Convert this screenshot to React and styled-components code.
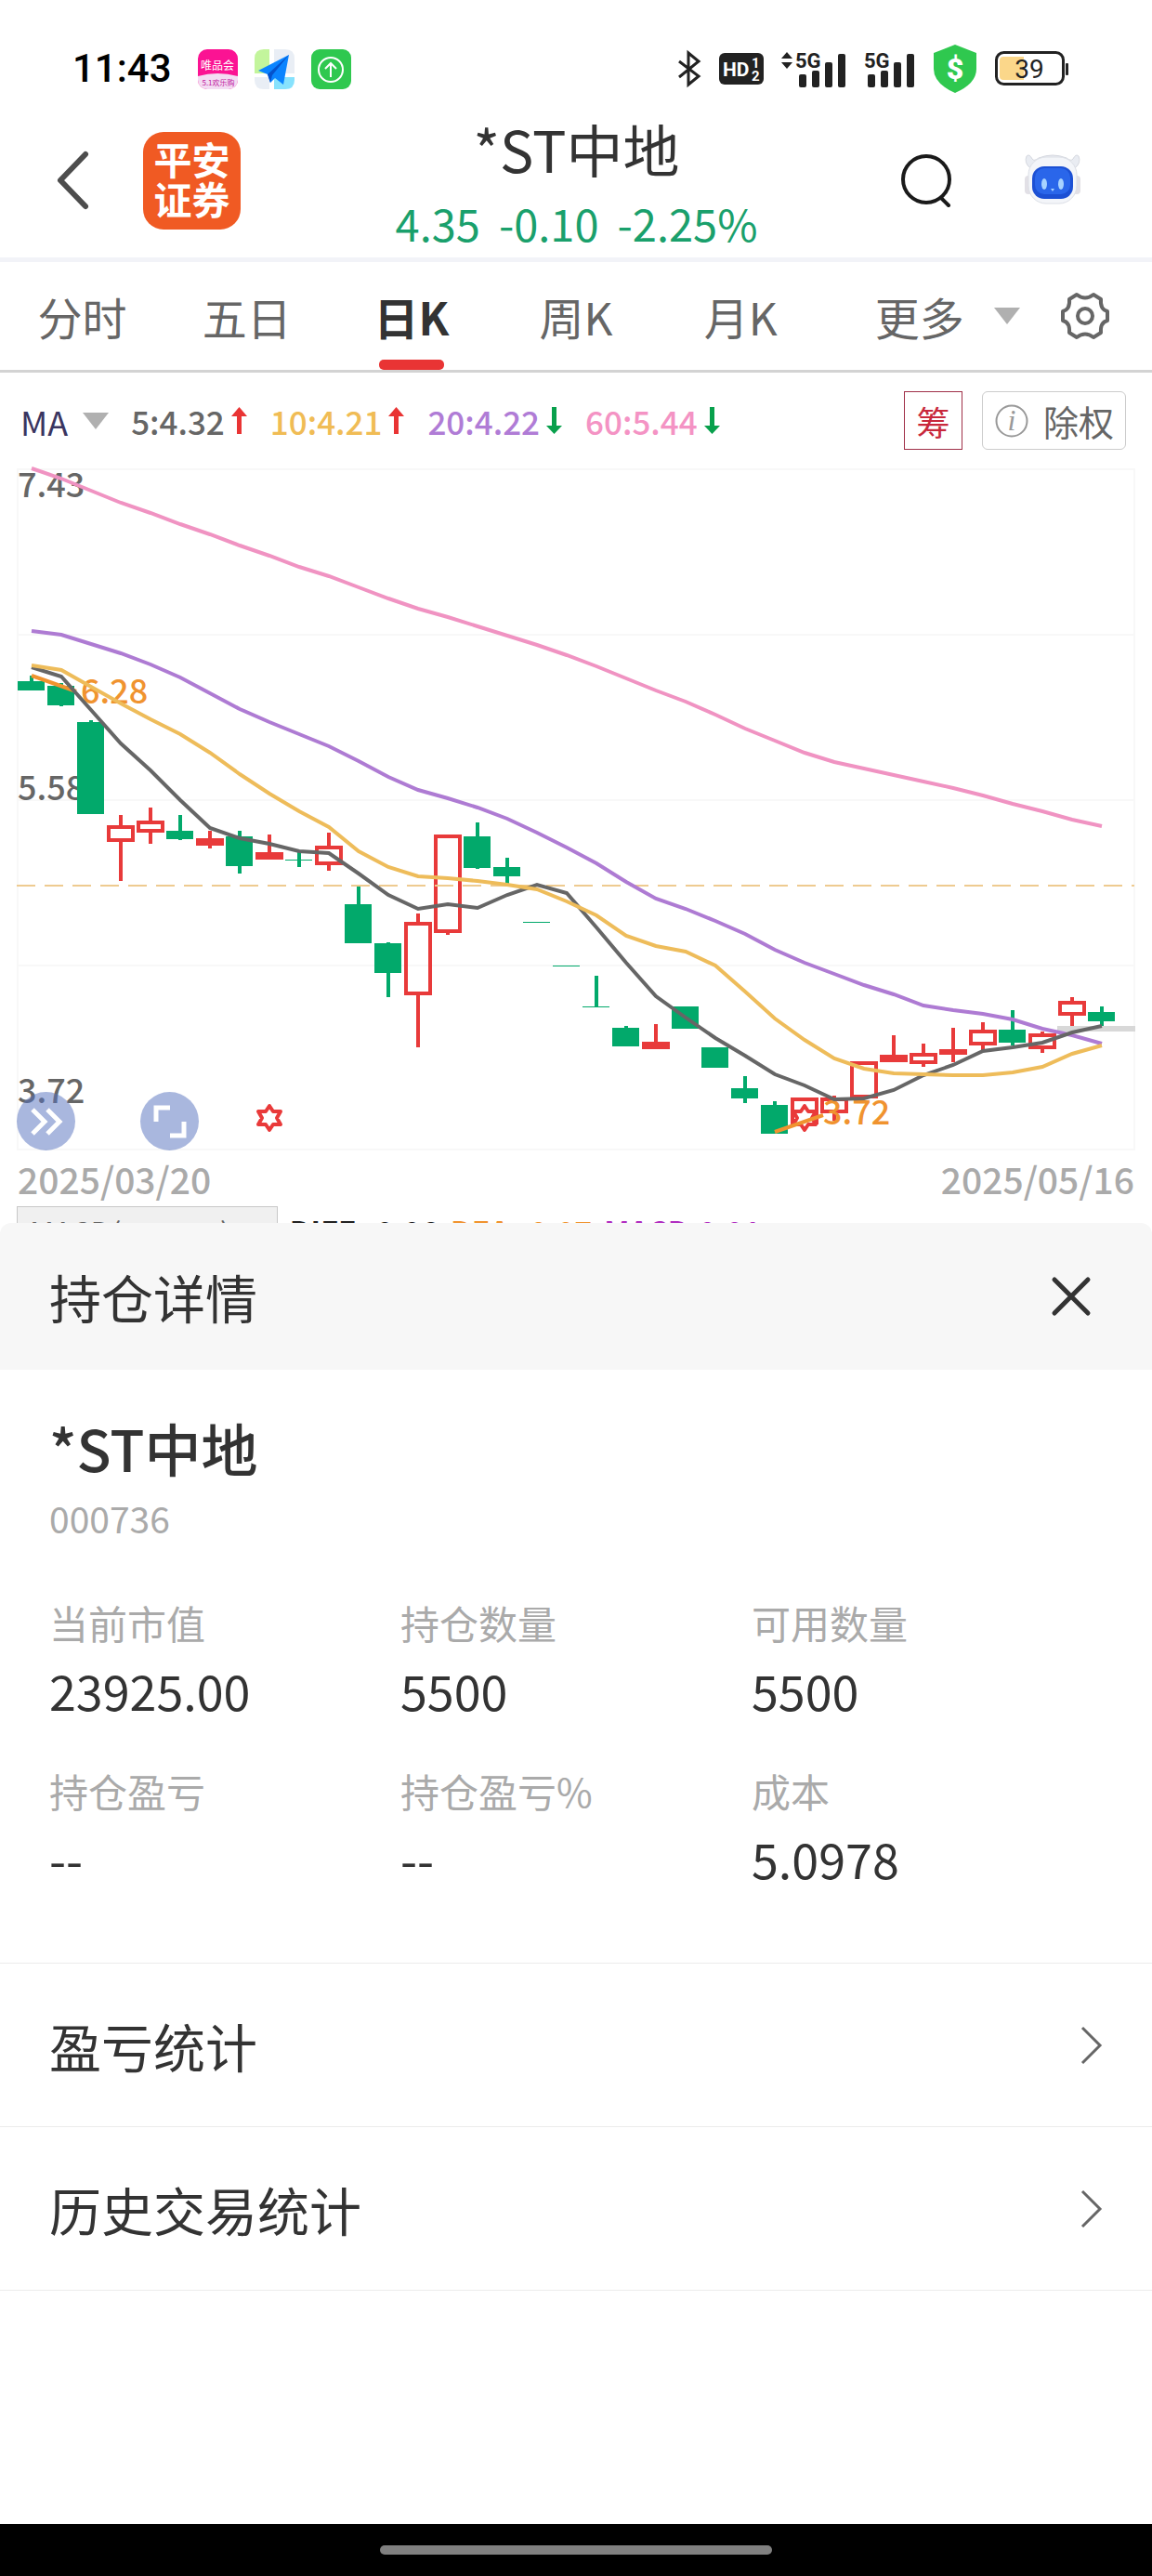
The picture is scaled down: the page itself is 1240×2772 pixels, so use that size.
import { useState } from "react";
import styled, { createGlobalStyle } from "styled-components";

const tabs = ["分时", "五日", "日K", "周K", "月K"];

const averages = [
  { label: "5:4.32", color: "#666666", up: true },
  { label: "10:4.21", color: "#f0bc55", up: true },
  { label: "20:4.22", color: "#b07cd6", up: false },
  { label: "60:5.44", color: "#f493c4", up: false },
];

const macd = [
  { label: "DIFF:-0.06", color: "#222222" },
  { label: "DEA:-0.07", color: "#f0932f" },
  { label: "MACD:0.01", color: "#b02cc0" },
];

const position = [
  { label: "当前市值", value: "23925.00" },
  { label: "持仓数量", value: "5500" },
  { label: "可用数量", value: "5500" },
  { label: "持仓盈亏", value: "--" },
  { label: "持仓盈亏%", value: "--" },
  { label: "成本", value: "5.0978" },
];

const links = ["盈亏统计", "历史交易统计"];

// [direction, body top, body bottom, wick top, wick bottom]
const candles = [
  ["down", 733, 743, 727, 743],
  ["down", 738, 759, 735, 760],
  ["down", 777, 876, 775, 876],
  ["up", 888, 906, 877, 948],
  ["up", 883, 896, 869, 908],
  ["down", 894, 903, 877, 904],
  ["up", 902, 910, 894, 913],
  ["down", 900, 932, 894, 940],
  ["up", 917, 925, 898, 925],
  ["down", 925, 926, 917, 933],
  ["up", 910, 931, 896, 937],
  ["down", 973, 1015, 954, 1015],
  ["down", 1015, 1047, 1014, 1073],
  ["up", 992, 1071, 983, 1127],
  ["up", 898, 1004, 898, 1006],
  ["down", 900, 934, 885, 935],
  ["down", 933, 943, 923, 952],
  ["down", 992, 993, 992, 993],
  ["down", 1039, 1040, 1039, 1040],
  ["down", 1083, 1084, 1050, 1083],
  ["down", 1106, 1126, 1104, 1126],
  ["up", 1121, 1129, 1102, 1129],
  ["down", 1083, 1107, 1083, 1107],
  ["down", 1127, 1149, 1127, 1149],
  ["down", 1171, 1182, 1158, 1187],
  ["down", 1189, 1220, 1185, 1220],
  ["up", 1181, 1210, 1181, 1210],
  ["up", 1181, 1198, 1179, 1206],
  ["up", 1142, 1182, 1142, 1182],
  ["up", 1135, 1143, 1114, 1143],
  ["up", 1133, 1145, 1123, 1148],
  ["up", 1129, 1135, 1106, 1143],
  ["up", 1108, 1125, 1100, 1130],
  ["down", 1108, 1122, 1087, 1125],
  ["up", 1112, 1129, 1110, 1133],
  ["up", 1077, 1093, 1073, 1104],
  ["down", 1089, 1099, 1083, 1104],
];

const lines = [
  {
    color: "#f093c2",
    points: [
      504, 515, 528, 541, 552, 564, 575, 587, 598, 610, 620, 632, 644, 655, 664,
      674, 684, 694, 705, 717, 730, 743, 755, 769, 784, 797, 810, 820, 827, 834,
      841, 848, 856, 865, 873, 882, 889,
    ],
  },
  {
    color: "#ae7bd3",
    points: [
      679, 683, 693, 703, 715, 729, 746, 763, 777, 790, 803, 819, 836, 850, 859,
      869, 881, 896, 912, 929, 949, 967, 978, 991, 1005, 1022, 1036, 1048, 1060,
      1070, 1082, 1087, 1091, 1097, 1107, 1114, 1123,
    ],
  },
  {
    color: "#666666",
    points: [
      718, 728, 764, 800, 829, 861, 891, 902, 908, 916, 918, 940, 963, 978, 973,
      977, 963, 952, 961, 998, 1036, 1072, 1095, 1117, 1136, 1156, 1168, 1183,
      1182, 1173, 1157, 1146, 1131, 1127, 1122, 1111, 1104,
    ],
  },
  {
    color: "#eebc5a",
    points: [
      716, 721, 739, 757, 774, 790, 810, 833, 854, 873, 890, 916, 933, 943, 945,
      948, 952, 957, 970, 985, 1007, 1018, 1024, 1039, 1067, 1096, 1119, 1139,
      1150, 1155, 1156, 1157, 1157, 1154, 1148, 1134, 1125,
    ],
  },
];

const candleX = (index) => 34 + index * 32;

const STAR =
  "M0 -13 L4 -7 L12 -7 L8 0 L12 7 L4 7 L0 13 L-4 7 L-12 7 L-8 0 L-12 -7 L-4 -7 Z";

function Candle({ index, data }) {
  const [direction, top, bottom, high, low] = data;
  const x = candleX(index);
  const up = direction === "up";
  const color = up ? "#e83a3a" : "#02a96b";

  return (
    <g stroke={color}>
      {high < top && <line x1={x} x2={x} y1={high} y2={top} strokeWidth="4" />}
      {low > bottom && (
        <line x1={x} x2={x} y1={bottom} y2={low} strokeWidth="4" />
      )}
      {up ? (
        <rect
          x={x - 13}
          y={top + 2}
          width="26"
          height={bottom - top - 4}
          fill="none"
          strokeWidth="4"
        />
      ) : (
        <rect
          x={x - 15}
          y={top}
          width="29"
          height={bottom - top}
          fill={color}
          stroke="none"
        />
      )}
    </g>
  );
}

function KLineChart() {
  return (
    <ChartSvg viewBox="0 500 1240 742" role="img" aria-label="日K">
      <g stroke="#f8f8f8" strokeWidth="2" fill="none">
        <rect x="19" y="505" width="1202" height="732" />
        <path d="M19 683H1221M19 861H1221M19 1039H1221" />
      </g>
      <AxisText x="19" y="535">
        7.43
      </AxisText>
      <AxisText x="19" y="861">
        5.58
      </AxisText>
      <AxisText x="19" y="1187">
        3.72
      </AxisText>
      <rect x="1138" y="1104" width="84" height="6" fill="#d8d8d8" />
      {candles.map((data, index) => (
        <Candle key={index} index={index} data={data} />
      ))}
      <line
        x1="18"
        x2="1221"
        y1="953"
        y2="953"
        stroke="#eecb90"
        strokeWidth="2"
        strokeDasharray="20 10"
      />
      <g fill="none" stroke="#e93a3a" strokeWidth="4" strokeLinejoin="round">
        <path d={STAR} transform="translate(290 1203)" />
        <path d={STAR} transform="translate(866 1203)" fill="#fff" />
      </g>
      <path
        d="M34 727L82 744M834 1218L886 1200"
        stroke="#f0932f"
        strokeWidth="4"
      />
      <MarkText x="87" y="757">
        6.28
      </MarkText>
      <MarkText x="886" y="1210">
        3.72
      </MarkText>
      {lines.map((line) => (
        <polyline
          key={line.color}
          points={line.points.map((y, i) => `${candleX(i)},${y}`).join(" ")}
          fill="none"
          stroke={line.color}
          strokeWidth="4"
        />
      ))}
    </ChartSvg>
  );
}

function Triangle() {
  return (
    <svg width="28" height="18" viewBox="0 0 28 18" aria-hidden="true">
      <path d="M0 0H28L14 18Z" fill="#b0b0b0" />
    </svg>
  );
}

function Arrow({ up }) {
  return (
    <svg width="17" height="29" viewBox="0 0 17 29" aria-hidden="true">
      {up ? (
        <path d="M8.5 0L17 10H11V29H6V10H0Z" fill="#e93434" />
      ) : (
        <path d="M8.5 29L17 20H11V0H6V20H0Z" fill="#08a04c" />
      )}
    </svg>
  );
}

function Signal({ roaming }) {
  return (
    <svg
      width={roaming ? 70 : 55}
      height="42"
      viewBox={roaming ? "-15 0 70 42" : "0 0 55 42"}
      aria-hidden="true"
    >
      {roaming && <path d="M-15 10L-9 3L-3 10ZM-15 14L-9 21L-3 14Z" />}
      <NetworkText x="0" y="20">
        5G
      </NetworkText>
      <rect x="4" y="27" width="8" height="14" rx="2" />
      <rect x="18" y="23" width="8" height="18" rx="2" />
      <rect x="32" y="14" width="8" height="27" rx="2" />
      <rect x="46" y="5" width="8" height="36" rx="2" />
    </svg>
  );
}

function StatusBar() {
  return (
    <Status>
      <Clock>11:43</Clock>
      <AppIcons>
        <svg width="43" height="43" viewBox="0 0 43 43" aria-hidden="true">
          <defs>
            <clipPath id="shop">
              <rect width="43" height="43" rx="10" />
            </clipPath>
          </defs>
          <g clipPath="url(#shop)">
            <rect width="43" height="43" fill="#fb1393" />
            <path d="M0 29Q21 23 43 29V43H0Z" fill="#f3dcf3" />
            <ShopText x="21" y="22" $size={12} fill="#fff">
              唯品会
            </ShopText>
            <ShopText x="22" y="39" $size={8} fill="#c0169c">
              5.1欢乐购
            </ShopText>
          </g>
        </svg>
        <svg width="43" height="43" viewBox="0 0 43 43" aria-hidden="true">
          <path d="M10 0H16V26H0V10Q0 0 10 0Z" fill="#c3f59c" />
          <path d="M21 0H33Q43 0 43 10V26H21Z" fill="#e9eef5" />
          <path d="M0 30H16V43H10Q0 43 0 33Z" fill="#e9eef5" />
          <path d="M21 30H43V33Q43 43 33 43H21Z" fill="#87e2fd" />
          <path d="M37 6L4 23L14 27L17 36L22 31L31 38Z" fill="#0a84ff" />
          <path d="M37 6L14 27L17 36L19 28Z" fill="#0552cc" />
        </svg>
        <svg width="43" height="43" viewBox="0 0 43 43" aria-hidden="true">
          <rect width="43" height="43" rx="9" fill="#2fc84f" />
          <g fill="none" stroke="#fff" strokeWidth="2">
            <circle cx="21" cy="22" r="13" />
            <path d="M21 30V15M15 21L21 15L27 21" />
          </g>
        </svg>
      </AppIcons>
      <SystemIcons>
        <svg width="26" height="40" viewBox="0 0 26 40" aria-hidden="true">
          <path
            d="M2 12L23 28L12 37V3L23 12L2 29"
            fill="none"
            stroke="#222"
            strokeWidth="3"
          />
        </svg>
        <svg width="48" height="34" viewBox="0 0 48 34" aria-hidden="true">
          <rect width="48" height="34" rx="6" fill="#222" />
          <HdText x="4" y="25" $size={21}>
            HD
          </HdText>
          <HdText x="35" y="16" $size={15}>
            1
          </HdText>
          <HdText x="35" y="30" $size={15}>
            2
          </HdText>
        </svg>
        <Signal roaming />
        <Signal />
        <svg width="48" height="52" viewBox="0 0 48 52" aria-hidden="true">
          <path
            d="M24 0L47 9V26Q47 42 24 52Q1 42 1 26V9Z"
            fill="#2fc84f"
          />
          <ShieldText x="24" y="37">
            $
          </ShieldText>
        </svg>
        <svg width="79" height="38" viewBox="0 0 79 38" aria-hidden="true">
          <path d="M9 6H31V31H9Q5 31 5 27V10Q5 6 9 6Z" fill="#fbd78a" />
          <rect
            x="1.5"
            y="1.5"
            width="72"
            height="34"
            rx="8"
            fill="none"
            stroke="#222"
            strokeWidth="3"
          />
          <rect x="76" y="13" width="3" height="13" rx="1" fill="#222" />
          <BatteryText x="37" y="29">
            39
          </BatteryText>
        </svg>
      </SystemIcons>
    </Status>
  );
}

function Robot() {
  return (
    <svg width="62" height="60" viewBox="0 0 62 60" aria-hidden="true">
      <path
        d="M7 17Q0 11 3 4Q6 1 9 7Q11 10 16 6Q31 0 46 6Q51 10 53 7Q56 1 59 4Q62 11 55 17Z"
        fill="#e9ecf2"
        stroke="#d5d8df"
      />
      <rect x="1" y="25" width="8" height="20" rx="4" fill="#e2e0e6" />
      <rect x="53" y="25" width="8" height="20" rx="4" fill="#e2e0e6" />
      <rect
        x="5"
        y="5"
        width="52"
        height="50"
        rx="19"
        fill="#f3f5f9"
        stroke="#dcdfe6"
      />
      <rect x="9" y="15" width="44" height="35" rx="13" fill="#1c50d4" />
      <rect x="12" y="17" width="38" height="28" rx="10" fill="#2a66ea" />
      <ellipse cx="22" cy="34" rx="3" ry="6" fill="#a8d3ff" />
      <ellipse cx="40" cy="34" rx="3" ry="6" fill="#a8d3ff" />
      <path d="M29 39H33L31 42Z" fill="#a8d3ff" />
    </svg>
  );
}

export default function App() {
  const [active, setActive] = useState("日K");

  return (
    <Page>
      <GlobalStyle />
      <StatusBar />
      <Header>
        <HeaderSide>
          <IconButton aria-label="返回">
            <svg width="34" height="64" viewBox="0 0 34 64">
              <path
                d="M31 4L4 32L31 60"
                fill="none"
                stroke="#4d4d4d"
                strokeWidth="6"
                strokeLinecap="round"
                strokeLinejoin="round"
              />
            </svg>
          </IconButton>
          <Logo>
            平安
            <br />
            证券
          </Logo>
        </HeaderSide>
        <HeaderCenter>
          <StockTitle>*ST中地</StockTitle>
          <Quote>
            <span>4.35</span>
            <span>-0.10</span>
            <span>-2.25%</span>
          </Quote>
        </HeaderCenter>
        <HeaderSide $end>
          <IconButton aria-label="搜索">
            <svg width="54" height="58" viewBox="0 0 54 58">
              <g
                fill="none"
                stroke="#1a1a1a"
                strokeWidth="4"
                strokeLinecap="round"
              >
                <circle cx="27" cy="28" r="25" />
                <path d="M43 48L51 56" />
              </g>
            </svg>
          </IconButton>
          <IconButton aria-label="智能助手">
            <Robot />
          </IconButton>
        </HeaderSide>
      </Header>

      <TabBar>
        {tabs.map((tab) => (
          <Tab
            key={tab}
            $active={tab === active}
            onClick={() => setActive(tab)}
          >
            {tab}
          </Tab>
        ))}
        <TabExtras>
          <MoreButton>
            更多
            <Triangle />
          </MoreButton>
          <IconButton aria-label="设置">
            <svg width="52" height="52" viewBox="0 0 52 52">
              <g
                fill="none"
                stroke="#666"
                strokeWidth="4"
                strokeLinejoin="round"
              >
                <path d="M17 3Q26 10 35 3L43 8Q42 19 50 21V31Q42 33 43 44L35 49Q26 42 17 49L9 44Q10 33 2 31V21Q10 19 9 8Z" />
                <circle cx="26" cy="26" r="8" />
              </g>
            </svg>
          </IconButton>
        </TabExtras>
      </TabBar>

      <Toolbar>
        <MaButton>
          MA
          <Triangle />
        </MaButton>
        <Averages>
          {averages.map((item) => (
            <Average key={item.label} $color={item.color}>
              {item.label}
              <Arrow up={item.up} />
            </Average>
          ))}
        </Averages>
        <ChipButton>筹</ChipButton>
        <RightsButton>
          <svg width="36" height="36" viewBox="0 0 36 36" aria-hidden="true">
            <circle
              cx="18"
              cy="18"
              r="16.5"
              fill="none"
              stroke="#999"
              strokeWidth="2"
            />
            <InfoText x="18" y="28">
              i
            </InfoText>
          </svg>
          除权
        </RightsButton>
      </Toolbar>

      <ChartArea>
        <KLineChart />
        <ChartTools>
          <RoundButton aria-label="展开">
            <svg width="36" height="32" viewBox="0 0 36 32">
              <path
                d="M3 3L16 16L3 29M19 3L32 16L19 29"
                fill="none"
                stroke="#fff"
                strokeWidth="5"
              />
            </svg>
          </RoundButton>
          <RoundButton aria-label="全屏">
            <svg width="36" height="36" viewBox="0 0 36 36">
              <path
                d="M3 18V3H18M33 18V33H18"
                fill="none"
                stroke="#fff"
                strokeWidth="5"
              />
            </svg>
          </RoundButton>
        </ChartTools>
      </ChartArea>
      <Dates>
        <span>2025/03/20</span>
        <span>2025/05/16</span>
      </Dates>
      <MacdRow>
        <MacdButton>
          MACD(12,26,9)
          <Triangle />
        </MacdButton>
        {macd.map((item) => (
          <MacdValue key={item.label} $color={item.color}>
            {item.label}
          </MacdValue>
        ))}
      </MacdRow>

      <Sheet>
        <SheetHeader>
          <SheetTitle>持仓详情</SheetTitle>
          <IconButton aria-label="关闭">
            <svg width="42" height="42" viewBox="0 0 42 42">
              <path
                d="M3 3L39 39M39 3L3 39"
                stroke="#333"
                strokeWidth="5"
                strokeLinecap="round"
              />
            </svg>
          </IconButton>
        </SheetHeader>
        <SheetBody>
          <StockName>*ST中地</StockName>
          <StockCode>000736</StockCode>
          <Fields>
            {position.map((item) => (
              <Field key={item.label}>
                <FieldLabel>{item.label}</FieldLabel>
                <FieldValue>{item.value}</FieldValue>
              </Field>
            ))}
          </Fields>
        </SheetBody>
        <Links>
          {links.map((label) => (
            <LinkItem key={label}>
              <LinkRow href="#">
                {label}
                <svg width="24" height="40" viewBox="0 0 24 40">
                  <path
                    d="M2 1L21 20L2 39"
                    fill="none"
                    stroke="#666"
                    strokeWidth="3"
                  />
                </svg>
              </LinkRow>
            </LinkItem>
          ))}
        </Links>
      </Sheet>
      <NavBar>
        <NavHandle />
      </NavBar>
    </Page>
  );
}

const GlobalStyle = createGlobalStyle`
  * {
    box-sizing: border-box;
  }

  body {
    margin: 0;
    background: #ffffff;
    font-family: "Noto Sans CJK SC", sans-serif;
    color: #333333;
  }

  button {
    padding: 0;
    border: none;
    background: none;
    font: inherit;
    color: inherit;
    cursor: pointer;
  }

  svg {
    display: block;
    flex-shrink: 0;
    overflow: visible;
  }
`;

const Page = styled.div`
  display: flex;
  flex-direction: column;
  min-height: 100vh;
`;

const Status = styled.div`
  display: flex;
  align-items: center;
  height: 106px;
  padding: 42px 90px 0 78px;
`;

const Clock = styled.span`
  font-family: Roboto, sans-serif;
  font-weight: 500;
  font-size: 42px;
  line-height: 60px;
  color: #000000;
`;

const AppIcons = styled.div`
  display: flex;
  gap: 18px;
  margin-left: 28px;
`;

const SystemIcons = styled.div`
  display: flex;
  align-items: center;
  gap: 19px;
  margin-left: auto;
  fill: #222222;
`;

const NetworkText = styled.text`
  font-family: Roboto, sans-serif;
  font-weight: 700;
  font-size: 22px;
`;

const ShopText = styled.text`
  font-size: ${(props) => props.$size}px;
  text-anchor: middle;
`;

const HdText = styled.text`
  font-family: Roboto, sans-serif;
  font-weight: 700;
  font-size: ${(props) => props.$size}px;
  fill: #ffffff;
`;

const ShieldText = styled.text`
  font-family: Roboto, sans-serif;
  font-weight: 900;
  font-size: 32px;
  text-anchor: middle;
  fill: #ffffff;
`;

const BatteryText = styled.text`
  font-family: Roboto, sans-serif;
  font-size: 28px;
  text-anchor: middle;
`;

const Header = styled.header`
  display: grid;
  grid-template-columns: 1fr auto 1fr;
  align-items: center;
  height: 176px;
  padding: 5px 76px 0 61px;
  border-bottom: 5px solid #f2f3f8;
`;

const HeaderSide = styled.div`
  display: flex;
  align-items: center;
  justify-content: ${(props) => (props.$end ? "flex-end" : "flex-start")};
  gap: ${(props) => (props.$end ? 78 : 59)}px;
`;

const IconButton = styled.button`
  display: flex;
  align-items: center;
  justify-content: center;
`;

const Logo = styled.div`
  display: flex;
  align-items: center;
  justify-content: center;
  width: 105px;
  height: 105px;
  padding-bottom: 4px;
  border-radius: 22px;
  background: #f05a23;
  font-weight: 700;
  font-size: 41px;
  line-height: 43px;
  color: #ffffff;
`;

const HeaderCenter = styled.div`
  display: flex;
  flex-direction: column;
  gap: 10px;
  padding: 6px 0 0 16px;
  text-align: center;
`;

const StockTitle = styled.h1`
  margin: 0;
  font-weight: 400;
  font-size: 61px;
  line-height: 76px;
`;

const Quote = styled.div`
  display: flex;
  justify-content: center;
  gap: 20px;
  font-size: 47px;
  line-height: 64px;
  color: #1aa06c;
`;

const TabBar = styled.nav`
  display: grid;
  grid-template-columns: repeat(5, 1fr) 2fr;
  height: 119px;
  border-bottom: 3px solid #d3d3d3;
`;

const Tab = styled.button`
  position: relative;
  font-weight: ${(props) => (props.$active ? 700 : 400)};
  font-size: 48px;
  line-height: 72px;
  color: ${(props) => (props.$active ? "#333333" : "#666666")};

  &::after {
    content: "";
    display: ${(props) => (props.$active ? "block" : "none")};
    position: absolute;
    bottom: 0;
    left: 50%;
    width: 70px;
    height: 11px;
    margin-left: -35px;
    border-radius: 5px;
    background: #e93434;
  }
`;

const TabExtras = styled.div`
  display: flex;
  align-items: center;
  justify-content: space-between;
  padding: 0 46px 0 56px;
`;

const MoreButton = styled.button`
  display: flex;
  align-items: center;
  gap: 32px;
  font-size: 48px;
  line-height: 72px;
  color: #666666;
`;

const Toolbar = styled.div`
  display: flex;
  align-items: center;
  padding: 20px 28px 16px 22px;
`;

const MaButton = styled.button`
  display: flex;
  align-items: center;
  gap: 16px;
  font-size: 36px;
  line-height: 48px;
  color: #3a3560;
`;

const Averages = styled.div`
  display: flex;
  gap: 25px;
  margin-left: 24px;
`;

const Average = styled.span`
  display: flex;
  align-items: center;
  gap: 7px;
  font-weight: 500;
  font-size: 35px;
  line-height: 48px;
  color: ${(props) => props.$color};
`;

const ChipButton = styled.button`
  width: 63px;
  height: 63px;
  margin-left: auto;
  font-size: 36px;
  line-height: 48px;
  color: #c8283c;

  ${Toolbar} & {
    border: 1px solid #a03048;
  }
`;

const RightsButton = styled.button`
  display: flex;
  align-items: center;
  gap: 16px;
  height: 63px;
  margin-left: 21px;
  font-size: 38px;
  line-height: 48px;
  color: #666666;

  ${Toolbar} & {
    padding: 0 12px 0 13px;
    border: 1px solid #cccccc;
    border-radius: 6px;
  }
`;

const InfoText = styled.text`
  font-family: "Liberation Serif", serif;
  font-style: italic;
  font-size: 32px;
  text-anchor: middle;
  fill: #999999;
`;

const ChartArea = styled.div`
  position: relative;
`;

const ChartSvg = styled.svg`
  width: 100%;
  height: auto;
`;

const AxisText = styled.text`
  font-weight: 500;
  font-size: 36px;
  fill: #666666;
`;

const MarkText = styled.text`
  font-weight: 500;
  font-size: 36px;
  fill: #f0932f;
`;

const ChartTools = styled.div`
  position: absolute;
  left: 18px;
  bottom: 4px;
  display: flex;
  gap: 70px;
`;

const RoundButton = styled.button`
  display: flex;
  align-items: center;
  justify-content: center;
  width: 63px;
  height: 63px;

  ${ChartTools} & {
    border-radius: 50%;
    background: rgba(83, 112, 190, 0.5);
  }
`;

const Dates = styled.div`
  display: flex;
  justify-content: space-between;
  padding: 0 19px;
  font-weight: 500;
  font-size: 39px;
  line-height: 52px;
  color: #aaaaaa;
`;

const MacdRow = styled.div`
  display: flex;
  align-items: flex-start;
  gap: 13px;
  height: 18px;
  margin-top: 4px;
  padding: 0 18px;
  overflow: hidden;
`;

const MacdButton = styled.button`
  display: flex;
  align-items: center;
  gap: 18px;
  font-size: 32px;
  line-height: 52px;
  color: #666666;

  ${MacdRow} & {
    padding: 0 4px 0 13px;
    border: 1px solid #c8c8c8;
    background: #f0f0f0;
  }
`;

const MacdValue = styled.span`
  font-weight: 700;
  font-size: 32px;
  line-height: 52px;
  color: ${(props) => props.$color};
`;

const Sheet = styled.section`
  flex: 1;
  background: #ffffff;
`;

const SheetHeader = styled.div`
  display: flex;
  align-items: center;
  justify-content: space-between;
  height: 158px;
  padding: 0 66px 0 53px;
  border-radius: 12px 12px 0 0;
  background: #f7f7f7;
`;

const SheetTitle = styled.h2`
  margin: 0;
  font-weight: 400;
  font-size: 56px;
  line-height: 72px;
`;

const SheetBody = styled.div`
  padding: 48px 53px 80px;
`;

const StockName = styled.h3`
  margin: 0;
  font-weight: 500;
  font-size: 61px;
  line-height: 72px;
`;

const StockCode = styled.div`
  margin-top: 15px;
  font-size: 39px;
  line-height: 48px;
  color: #aaaaaa;
`;

const Fields = styled.dl`
  display: grid;
  grid-template-columns: repeat(3, 1fr);
  row-gap: 48px;
  margin: 61px 0 0;
`;

const Field = styled.div`
  display: flex;
  flex-direction: column;
  gap: 13px;
`;

const FieldLabel = styled.dt`
  font-size: 42px;
  line-height: 56px;
  color: #aaaaaa;
`;

const FieldValue = styled.dd`
  margin: 0;
  font-size: 52px;
  line-height: 64px;
`;

const Links = styled.ul`
  margin: 0;
  padding: 0;
  list-style: none;
  border-bottom: 1px solid #ebebeb;
`;

const LinkItem = styled.li`
  border-top: 1px solid #ebebeb;
`;

const LinkRow = styled.a`
  display: flex;
  align-items: center;
  justify-content: space-between;
  height: 175px;
  padding: 0 53px;
  font-size: 56px;
  line-height: 72px;
  color: inherit;
  text-decoration: none;
`;

const NavBar = styled.footer`
  display: flex;
  align-items: center;
  justify-content: center;
  height: 56px;
  background: #000000;
`;

const NavHandle = styled.div`
  width: 34%;
  height: 10px;
  border-radius: 5px;
  background: #808080;
`;
